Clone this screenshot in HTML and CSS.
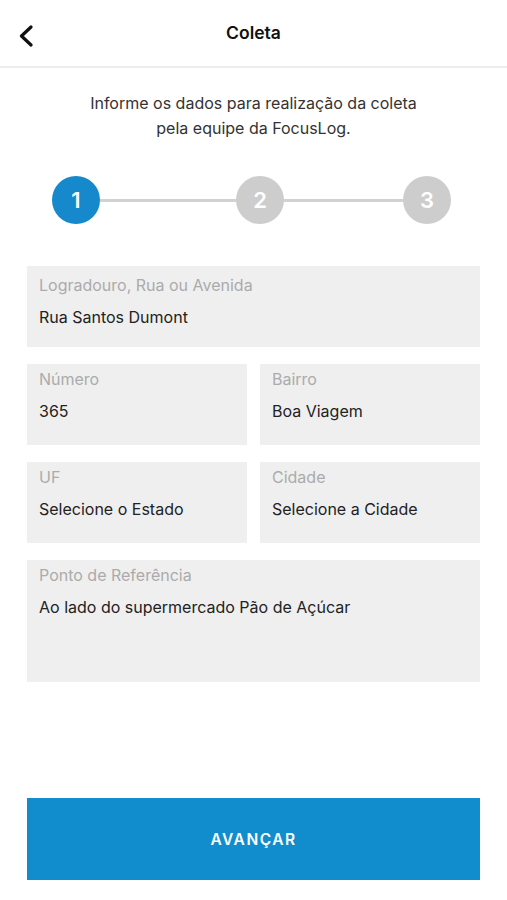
FILE: index.html
```html
<!DOCTYPE html>
<html lang="pt-BR">
<head>
  <meta charset="UTF-8">
  <meta name="viewport" content="width=device-width, initial-scale=1.0">
  <title>Coleta</title>
  <link rel="stylesheet" href="styles.css">
</head>
<body>
  <div class="screen">
    <header class="topbar">
      <button class="back" type="button" aria-label="Voltar">
        <svg width="16" height="22" viewBox="0 0 16 22">
          <path d="M13 2 L3.5 11 L13 20" fill="none" stroke="#111" stroke-width="3.2" stroke-linecap="round" stroke-linejoin="round"/>
        </svg>
      </button>
      <h1 class="title">Coleta</h1>
    </header>

    <p class="intro">Informe os dados para realização da coleta<br>pela equipe da FocusLog.</p>

    <div class="stepper">
      <span class="step active">1</span>
      <span class="line line-a"></span>
      <span class="step">2</span>
      <span class="line line-b"></span>
      <span class="step">3</span>
    </div>

    <form class="form" id="coletaForm">
      <div class="field first">
        <label>Logradouro, Rua ou Avenida</label>
        <div class="value">Rua Santos Dumont</div>
      </div>
      <div class="row">
        <div class="field">
          <label>Número</label>
          <div class="value">365</div>
        </div>
        <div class="field">
          <label>Bairro</label>
          <div class="value">Boa Viagem</div>
        </div>
      </div>
      <div class="row">
        <div class="field">
          <label>UF</label>
          <div class="value">Selecione o Estado</div>
        </div>
        <div class="field">
          <label>Cidade</label>
          <div class="value">Selecione a Cidade</div>
        </div>
      </div>
      <div class="field tall">
        <label>Ponto de Referência</label>
        <div class="value">Ao lado do supermercado Pão de Açúcar</div>
      </div>
    </form>

    <button class="next" type="submit" form="coletaForm">AVANÇAR</button>
  </div>
</body>
</html>
```

FILE: styles.css
```css
* {
  box-sizing: border-box;
}
body {
  margin: 0;
  font-family: Inter, "Liberation Sans", Arial, sans-serif;
  background: #fff;
  color: #222;
}
.screen {
  display: flex;
  flex-direction: column;
  min-height: 900px;
}
.topbar {
  height: 68px;
  border-bottom: 2px solid #ececec;
  display: flex;
  align-items: center;
  justify-content: center;
  position: relative;
  padding-bottom: 2px;
}
.back {
  position: absolute;
  left: 18px;
  top: 25px;
  background: none;
  border: none;
  padding: 0;
  display: flex;
}
.title {
  margin: 0;
  font-size: 17.5px;
  font-weight: 600;
  color: #111;
}
.intro {
  margin: 23px 0 0;
  text-align: center;
  font-size: 16px;
  line-height: 25px;
  color: #333;
}
.stepper {
  display: flex;
  align-items: center;
  padding: 0 56px 0 52px;
  margin-top: 35px;
}
.step {
  width: 48px;
  height: 48px;
  border-radius: 50%;
  background: #cdcdcd;
  color: #fff;
  font-size: 22px;
  font-weight: 600;
  display: flex;
  align-items: center;
  justify-content: center;
}
.step.active {
  background: #1589cb;
}
.line {
  height: 3px;
  background: #d2d2d2;
}
.line-a {
  flex: 136;
}
.line-b {
  flex: 119;
}
.form {
  display: flex;
  flex-direction: column;
  gap: 17px;
  padding: 0 27px;
  margin-top: 42px;
}
.row {
  display: grid;
  grid-template-columns: 1fr 1fr;
  gap: 13px;
}
.field {
  background: #efefef;
  height: 81px;
  padding: 5px 12px 0;
}
.field.first {
  padding-top: 9px;
}
.field.tall {
  height: 122px;
}
.field label {
  display: block;
  font-size: 16px;
  line-height: 20px;
  color: #ababab;
}
.value {
  margin-top: 12px;
  font-size: 16px;
  line-height: 20px;
  color: #222;
}
.next {
  margin: auto 27px 20px;
  height: 82px;
  border: none;
  background: #118dcd;
  color: #fff;
  font-family: inherit;
  font-size: 15.5px;
  font-weight: 600;
  letter-spacing: 1.5px;
}
```
